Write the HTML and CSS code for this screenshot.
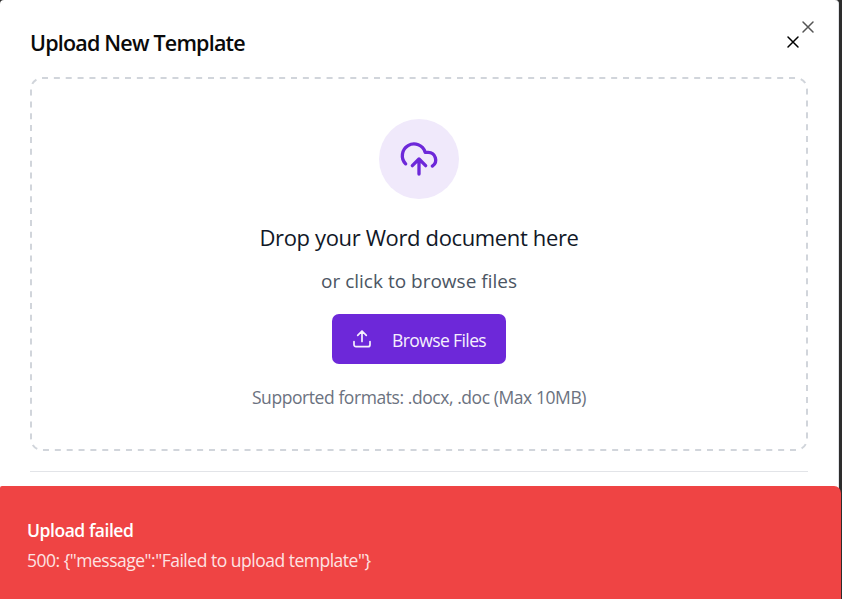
FILE: index.html
```html
<!DOCTYPE html>
<html lang="en">
<head>
<meta charset="utf-8">
<title>Upload New Template</title>
<link rel="stylesheet" href="styles.css">
</head>
<body>
<main class="modal">
  <header class="modal-header">
    <h2 class="modal-title"><span>Upload New Template</span></h2>
    <button class="header-close" aria-label="Close">
      <svg viewBox="0 0 24 24"><path d="M18 6 6 18M6 6l12 12"/></svg>
    </button>
  </header>
  <button class="corner-close" aria-label="Dismiss">
    <svg viewBox="0 0 24 24"><path d="M18 6 6 18M6 6l12 12"/></svg>
  </button>
  <section class="dropzone">
    <svg class="outline" viewBox="0 0 778 374"><rect x="1" y="1" width="776" height="372" rx="11" pathLength="192"/></svg>
    <div class="cloud">
      <svg viewBox="0 0 24 24"><path d="M4 14.899A7 7 0 1 1 15.71 8h1.79a4.500 4.500 0 0 1 2.500 8.242"/><path d="M12 12v9M8 16l4-4 4 4"/></svg>
    </div>
    <h3 class="drop-title"><span>Drop your Word document here</span></h3>
    <p class="drop-hint"><span>or click to browse files</span></p>
    <button class="browse">
      <svg viewBox="0 0 20 20"><path d="M2 12.500v3.200a2 2 0 0 0 2 2h12a2 2 0 0 0 2-2v-3.200M10 12.500V2.500M5.700 6.300 10 2l4.300 4.300"/></svg>
      <span>Browse Files</span>
    </button>
    <p class="formats"><span>Supported formats: .docx, .doc (Max 10MB)</span></p>
  </section>
  <hr class="divider">
</main>
<aside class="toast" role="alert">
  <strong class="toast-title"><span>Upload failed</span></strong>
  <p class="toast-message"><span>500: {"message":"Failed to upload template"}</span></p>
</aside>
</body>
</html>
```

FILE: styles.css
```css
* { box-sizing: border-box; margin: 0; }
body {
  height: 599px;
  overflow: hidden;
  background: #2d2d2d;
  font-family: "Open Sans", "Noto Sans", sans-serif;
}
button { border: 0; padding: 0; background: none; font: inherit; }
svg { display: block; fill: none; stroke: currentColor; stroke-width: 2; stroke-linecap: round; stroke-linejoin: round; }
span { white-space: nowrap; }
.modal {
  position: relative;
  width: 839px;
  height: 599px;
  padding: 27px 30px 0;
  border-right: 1px solid #e2e4e8;
  border-radius: 4px;
  background: #fff;
}
.modal-header { display: flex; align-items: center; justify-content: space-between; height: 30px; padding-right: 5px; margin-bottom: 20px; }
.modal-title { font-size: 21.5px; line-height: 30px; font-weight: 600; letter-spacing: -0.8px; color: #0a0a0a; padding-top: 2px; }
.header-close { color: #000; padding-bottom: 1px; }
.header-close svg, .corner-close svg { width: 20px; height: 20px; stroke-width: 1.8; }
.corner-close { position: absolute; top: 17px; right: 20px; color: #555; }
.dropzone {
  position: relative;
  display: flex;
  flex-direction: column;
  align-items: center;
  height: 374px;
  padding-top: 42px;
}
.outline { position: absolute; inset: 0; width: 778px; height: 374px; color: #d1d5db; stroke-linecap: butt; stroke-dasharray: 0.506 0.494; }
.cloud { display: grid; place-items: center; width: 80px; height: 80px; border-radius: 50%; background: #f0e9fb; color: #6d28d9; }
.cloud svg { width: 40px; height: 40px; }
.drop-title { margin-top: 23px; font-size: 22px; line-height: 30px; font-weight: 400; letter-spacing: -0.36px; color: #111827; }
.drop-hint { margin-top: 16px; font-size: 19px; line-height: 26px; color: #4b5563; }
.browse { display: flex; align-items: center; width: 174px; height: 50px; margin-top: 20px; padding-left: 20px; border-radius: 7px; background: #6d28d9; color: #f5f0fd; font-size: 17.500px; letter-spacing: -0.6px; }
.browse svg { width: 20px; height: 20px; margin-right: 20px; stroke-width: 1.7; }
.browse span { padding-top: 2px; }
.formats { margin-top: 21px; font-size: 17.500px; line-height: 24px; letter-spacing: -0.43px; color: #6b7280; }
.divider { margin-top: 20px; border: 0; height: 1px; background: #e2e4e8; }
.toast { position: absolute; left: 0; top: 486px; width: 841px; height: 120px; padding: 31px 27px; border-radius: 2px 7px 0 0; background: #ef4444; color: #fff; }
.toast-title { display: block; font-size: 17.500px; line-height: 26px; font-weight: 600; letter-spacing: -0.45px; }
.toast-message { margin-top: 4px; font-size: 17.500px; line-height: 26px; letter-spacing: -0.49px; color: #fde3e3; }
```
